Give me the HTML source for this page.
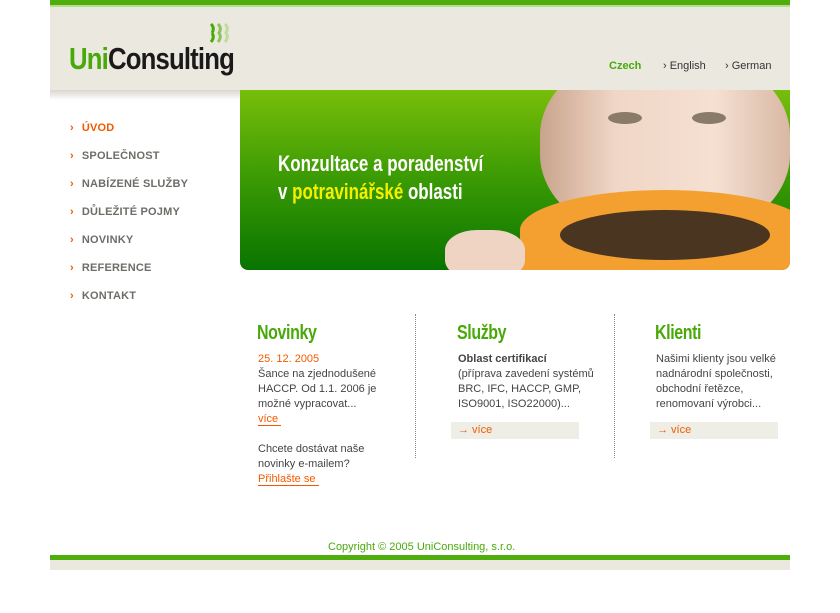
<!DOCTYPE html>
<html><head><meta charset="utf-8"><style>
*{margin:0;padding:0;box-sizing:border-box}
body{width:840px;height:613px;background:#fff;position:relative;font-family:"Liberation Sans",sans-serif;overflow:hidden}
.a{position:absolute}
.nav div{position:absolute;left:70px;font-size:11px;font-weight:bold;color:#6b6f68;letter-spacing:.2px;font-family:"Liberation Sans",sans-serif}
.nav div span{color:#f25a00;margin-right:8px;font-size:11px}
h2{position:absolute;font-family:"Liberation Sans",sans-serif;font-size:20px;color:#4aa90a;font-weight:bold;letter-spacing:-.5px;transform:scaleX(.8);transform-origin:left}
.t{position:absolute;font-size:11px;line-height:15px;color:#444}
.or{color:#f25a00}
.more{position:absolute;width:128px;height:17px;background:#efeee6;font-size:11px;color:#f25a00;padding:2px 0 0 7px}
</style></head><body>
<div class="a" style="left:50px;top:0;width:740px;height:5px;background:#4fae0b"></div>
<div class="a" style="left:50px;top:5px;width:740px;height:2px;background:#b6dc8e"></div>
<div class="a" style="left:50px;top:7px;width:740px;height:83px;background:#ebe9df"></div>
<div class="a" style="left:50px;top:90px;width:190px;height:10px;background:linear-gradient(#d8d6cc,#fff)"></div>
<div class="a" style="left:69px;top:41px;font-family:'Liberation Sans',sans-serif;font-weight:bold;font-size:31px;letter-spacing:-1px;transform:scaleX(.83);transform-origin:left;color:#1a1a1a"><span style="color:#4aa90a">Uni</span>Consulting</div>
<svg class="a" style="left:209px;top:23px" width="24" height="20" viewBox="0 0 24 20">
<path d="M2 1 Q6 5 3 10 M3 10 Q6 14 2 19" stroke="#4aa90a" stroke-width="3" fill="none"/>
<path d="M9 1 Q13 5 10 10 Q13 14 9 19" stroke="#8cc45a" stroke-width="3" fill="none"/>
<path d="M16 1 Q20 5 17 10 Q20 14 16 19" stroke="#bfdc9c" stroke-width="3" fill="none"/>
</svg>
<div class="a" style="left:609px;top:60px;font-size:11px;font-weight:bold;color:#4aa90a">Czech</div>
<div class="a" style="left:663px;top:60px;font-size:11px;color:#333">› English</div>
<div class="a" style="left:725px;top:60px;font-size:11px;color:#333">› German</div>
<div class="nav">
<div style="top:122px;color:#f25a00"><span>›</span>ÚVOD</div>
<div style="top:150px"><span>›</span>SPOLEČNOST</div>
<div style="top:178px"><span>›</span>NABÍZENÉ SLUŽBY</div>
<div style="top:206px"><span>›</span>DŮLEŽITÉ POJMY</div>
<div style="top:234px"><span>›</span>NOVINKY</div>
<div style="top:262px"><span>›</span>REFERENCE</div>
<div style="top:290px"><span>›</span>KONTAKT</div>
</div>
<div class="a" style="left:240px;top:90px;width:550px;height:180px;border-radius:0 0 8px 8px;overflow:hidden;background:linear-gradient(#78be0a,#3a9a04 50%,#087400)">
<div class="a" style="left:300px;top:-40px;width:250px;height:190px;border-radius:45%;background:linear-gradient(90deg,#c9a48c,#f0d6c6 30%,#f5e0d2 70%,#d9b8a4)"></div>
<div class="a" style="left:368px;top:22px;width:34px;height:12px;border-radius:50%;background:#8a7a68"></div>
<div class="a" style="left:452px;top:22px;width:34px;height:12px;border-radius:50%;background:#8a7a68"></div>
<div class="a" style="left:280px;top:100px;width:290px;height:80px;border-radius:50% 50% 0 0;background:#f3a030"></div>
<div class="a" style="left:320px;top:120px;width:210px;height:50px;border-radius:50%;background:#4a3520"></div>
<div class="a" style="left:205px;top:140px;width:80px;height:50px;border-radius:40%;background:#efd4c4"></div>
<div class="a" style="left:38px;top:60px;font-family:'Liberation Sans',sans-serif;font-weight:bold;font-size:22px;line-height:28px;color:#fff;transform:scaleX(.77);transform-origin:left;white-space:nowrap">Konzultace a poradenství<br>v <span style="color:#f5f000">potravinářské</span> oblasti</div>
</div>
<div class="a" style="left:415px;top:314px;height:144px;border-left:1px dotted #888"></div>
<div class="a" style="left:614px;top:314px;height:144px;border-left:1px dotted #888"></div>
<h2 style="left:257px;top:322px">Novinky</h2>
<h2 style="left:457px;top:322px">Služby</h2>
<h2 style="left:655px;top:322px">Klienti</h2>
<div class="t" style="left:258px;top:352px"><span class="or">25. 12. 2005</span><br>Šance na zjednodušené<br>HACCP. Od 1.1. 2006 je<br>možné vypracovat...<br><span class="or" style="border-bottom:1px solid #f25a00">více&nbsp;</span><br><br>Chcete dostávat naše<br>novinky e-mailem?<br><span class="or" style="border-bottom:1px solid #f25a00">Přihlašte se&nbsp;</span></div>
<div class="t" style="left:458px;top:352px"><b>Oblast certifikací</b><br>(příprava zavedení systémů<br>BRC, IFC, HACCP, GMP,<br>ISO9001, ISO22000)...</div>
<div class="more" style="left:451px;top:422px">→ více</div>
<div class="t" style="left:656px;top:352px">Našimi klienty jsou velké<br>nadnárodní společnosti,<br>obchodní řetězce,<br>renomovaní výrobci...</div>
<div class="more" style="left:650px;top:422px">→ více</div>
<div class="a" style="left:328px;top:541px;font-size:11px;color:#4aa90a">Copyright © 2005 UniConsulting, s.r.o.</div>
<div class="a" style="left:50px;top:555px;width:740px;height:5px;background:#4fae0b"></div>
<div class="a" style="left:50px;top:560px;width:740px;height:10px;background:#ebe9df"></div>
</body></html>
